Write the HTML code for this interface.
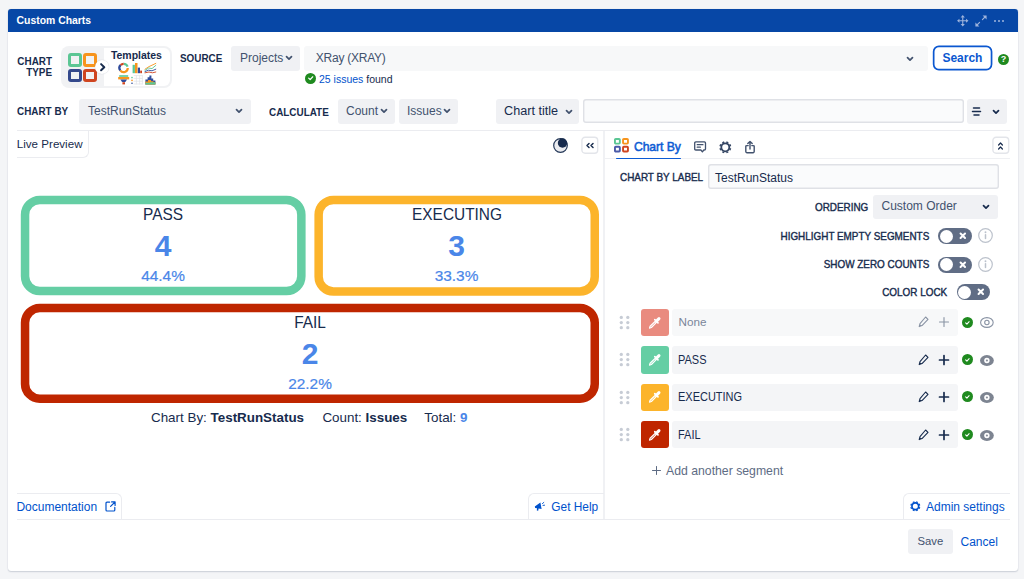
<!DOCTYPE html>
<html lang="en">
<head>
<meta charset="utf-8">
<title>Custom Charts</title>
<style>
*{box-sizing:border-box;margin:0;padding:0}
html,body{width:1024px;height:579px;overflow:hidden}
body{background:#f4f5f7;font-family:"Liberation Sans",Arial,sans-serif;color:#172b4d;font-size:12px;position:relative}
.a{position:absolute}
.t{position:absolute;white-space:nowrap;line-height:16px}
.b{font-weight:bold}
.lbl{font-weight:bold;font-size:11.2px;letter-spacing:0;color:#172b4d;transform:scaleX(.885);transform-origin:0 50%}
.btn{position:absolute;background:#f0f1f4;border-radius:3px;color:#42526e}
.blue{color:#0052cc}
#panel{left:8px;top:9px;width:1010px;height:561.5px;background:#fff;border-radius:3px;box-shadow:0 1px 1.5px rgba(9,30,66,.16),0 0 1px rgba(9,30,66,.16)}
#hdr{left:8px;top:9px;width:1010px;height:23px;background:#0747a6;border-radius:3px 3px 0 0}
.hl{position:absolute;background:#ebecf0}
.card{position:absolute;border-style:solid;border-width:8px;border-radius:19px;background:#fff}
.ct{position:absolute;text-align:center;white-space:nowrap}
.c1{font-size:16.4px;line-height:20px;color:#172b4d;transform:scaleX(.94);margin-top:-.6px}
.c2{font-size:30px;line-height:34px;font-weight:bold;color:#4a86e8}
.c3{font-size:15.4px;line-height:20px;color:#4a86e8;-webkit-text-stroke:.2px #4a86e8;margin-top:.4px}
svg{position:absolute;overflow:visible}
.rl{font-size:11px;letter-spacing:0;-webkit-text-stroke:.4px #172b4d;color:#172b4d;transform:scaleX(.9);transform-origin:100% 50%}
.seg{position:absolute;left:672px;width:285.5px;height:27.4px;background:#f4f5f7;border-radius:3px}
.sw{position:absolute;left:641px;width:27.7px;height:27.4px;border-radius:3px}
</style>
</head>
<body>
<div id="panel" class="a"></div>
<div id="hdr" class="a"></div>
<div class="t b" style="left:16.6px;top:13.4px;font-size:10.4px;color:#fff">Custom Charts</div>

<svg style="left:957px;top:15px" width="11.5" height="11.5" viewBox="-5.75 -5.75 11.5 11.5"><path d="M0 -3.6 V3.6 M-3.6 0 H3.6" fill="none" stroke="#9fb4dc" stroke-width="1.1"/><path d="M-2.1 -3.3 L0 -5.7 L2.1 -3.3 Z M-2.1 3.3 L0 5.7 L2.1 3.3 Z M-3.3 -2.1 L-5.7 0 L-3.3 2.1 Z M3.3 -2.1 L5.7 0 L3.3 2.1 Z" fill="#9fb4dc"/></svg>
<svg style="left:974.8px;top:14.9px" width="12" height="12" viewBox="0 0 12 12"><path d="M7.4 4.6 L10 2 M4.6 7.4 L2 10" fill="none" stroke="#9fb4dc" stroke-width="1.1" stroke-linecap="round"/><path d="M7.6 .4 H11.6 V4.4 Z M.4 7.6 V11.6 H4.4 Z" fill="#9fb4dc"/></svg>
<div class="a" style="left:993.75px;top:20px;width:2.4px;height:2.4px;border-radius:1.2px;background:#9fb4dc"></div>
<div class="a" style="left:997.75px;top:20px;width:2.4px;height:2.4px;border-radius:1.2px;background:#9fb4dc"></div>
<div class="a" style="left:1001.75px;top:20px;width:2.4px;height:2.4px;border-radius:1.2px;background:#9fb4dc"></div>
<!-- row 1 -->
<div class="t lbl" style="left:8.2px;top:55.5px;line-height:11.5px;text-align:right;width:44px;transform-origin:100% 50%">CHART<br>TYPE</div>
<div class="a" id="tpl" style="left:61px;top:46px;width:111px;height:42px;background:#f1f2f4;border-radius:8px"></div>
<div class="a" style="left:104px;top:48px;width:66px;height:38px;background:#fff;border-radius:0 6px 6px 0"></div>
<div class="a" style="left:68.2px;top:53px;width:13.5px;height:13.5px;border:3px solid #5bc694;border-radius:3px;background:#f1f2f4"></div>
<div class="a" style="left:83.3px;top:53px;width:13.6px;height:13.5px;border:3px solid #f7941d;border-radius:3px;background:#f1f2f4"></div>
<div class="a" style="left:68.2px;top:68.6px;width:13.5px;height:13.5px;border:3px solid #34498c;border-radius:3px;background:#f1f2f4"></div>
<div class="a" style="left:83.3px;top:68.6px;width:13.6px;height:13.5px;border:3px solid #cf4520;border-radius:3px;background:#f1f2f4"></div>
<div class="a" style="left:94.8px;top:59.7px;width:14.4px;height:14.4px;border-radius:8px;background:#fff;box-shadow:0 0 1px rgba(9,30,66,.25)"></div>
<svg style="left:100px;top:63px" width="5.4" height="8.4" viewBox="0 0 5.4 8.4"><path d="M1.1 1.1 L4.3 4.2 L1.1 7.3" fill="none" stroke="#172b4d" stroke-width="2" stroke-linecap="round" stroke-linejoin="round"/></svg>
<div class="t b" style="left:111px;top:46.6px;font-size:10.5px;letter-spacing:-.05px">Templates</div>
<svg style="left:117px;top:61px" width="41" height="25" viewBox="117 61 41 25">
<g fill="none" stroke-width="2.2">
<path d="M123.6 63.8 A4.2 4.2 0 0 1 127.6 66.6" stroke="#5bc694"/>
<path d="M127.8 68 A4.2 4.2 0 0 1 120.2 70.4" stroke="#f7941d"/>
<path d="M120.2 70.4 A4.2 4.2 0 0 1 120.6 65" stroke="#2f4b9b"/>
<path d="M120.6 65 A4.2 4.2 0 0 1 123.6 63.8" stroke="#cf4520"/>
</g>
<rect x="132.6" y="64.8" width="2.3" height="8.4" fill="#5bc694"/>
<rect x="135" y="63" width="2.5" height="10.2" fill="#f7941d"/>
<rect x="137.8" y="67.6" width="2.2" height="5.6" fill="#2f4b9b"/>
<rect x="140.2" y="70.6" width="1.8" height="2.6" fill="#cf4520"/>
<g fill="none" stroke-width=".9" stroke-linecap="round">
<path d="M145 69.2 L149 66.6 L152 65.2 L155.8 63.4" stroke="#f7941d"/>
<path d="M145 70.4 L148.6 68 L152 68.6 L155.8 65.4" stroke="#5bc694"/>
<path d="M145 71.6 L148.4 70.2 L152 70.8 L155.8 69.2" stroke="#2f4b9b"/>
<path d="M145 72.8 L149 72 L152.4 72.8 L155.8 72" stroke="#cf4520"/>
</g>
<rect x="119.2" y="75.2" width="9" height="1.6" fill="#5bc694"/>
<rect x="118.2" y="77" width="11" height="2.4" fill="#f7941d"/>
<path d="M120.4 79.6 H127 L125.4 82 H122 Z" fill="#2f4b9b"/>
<rect x="122.4" y="82.2" width="2.6" height="2.2" fill="#cf4520"/>
<g stroke="#dfe1e6" stroke-width=".7" fill="none"><path d="M133.6 75.6 H142.6 M133.6 78.4 H142.6 M133.6 81.2 H142.6 M133.6 84 H142.6 M136.4 75.4 V84.4 M139.6 75.4 V84.4 M142.4 75.4 V84.4"/></g>
<circle cx="132" cy="77.6" r=".8" fill="#5bc694"/><circle cx="132" cy="80.4" r=".8" fill="#f7941d"/><circle cx="132" cy="83.2" r=".8" fill="#2f4b9b"/>
<path d="M145.4 84.6 V79.4 H147.6 V77.2 H149.4 V75.4 H151.4 V78.4 H153.2 V80.6 H155.4 V84.6 Z" fill="#2f4b9b"/>
<path d="M145.4 84.6 V81.4 H148 V80 H151 V81.2 H153.4 V82.2 H155.4 V84.6 Z" fill="#f7941d"/>
<path d="M145.4 84.6 V82.8 H150 V82.2 H155.4 V84.6 Z" fill="#5bc694"/>
</svg>
<div class="t lbl" style="left:180px;top:50.4px">SOURCE</div>
<div class="btn" style="left:231px;top:45.75px;width:69px;height:24.75px"></div>
<div class="t" style="left:240px;top:50px;color:#42526e">Projects</div>
<svg style="left:285.5px;top:56px" width="6" height="4.2" viewBox="0 0 6 4.2"><path d="M0.5 0.6 L3.0 3.2 L5.5 0.6" fill="none" stroke="#42526e" stroke-width="1.7" stroke-linecap="round" stroke-linejoin="round"/></svg>
<div class="btn" style="left:304.2px;top:45.75px;width:623.8px;height:24.75px;background:#f7f8f9"></div>
<div class="t" style="left:315.8px;top:50px;color:#42526e;letter-spacing:-.25px">XRay (XRAY)</div>
<svg style="left:907px;top:56.5px" width="6" height="4.2" viewBox="0 0 6 4.2"><path d="M0.5 0.6 L3.0 3.2 L5.5 0.6" fill="none" stroke="#42526e" stroke-width="1.7" stroke-linecap="round" stroke-linejoin="round"/></svg>
<div class="a" style="left:305px;top:73px;width:10.6px;height:10.6px;border-radius:6px;background:#1f8a1f"></div>
<svg style="left:307.7px;top:76.4px" width="5.4" height="4.3" viewBox="0 0 5 4"><path d="M0.6 2 L2 3.3 L4.4 0.7" fill="none" stroke="#fff" stroke-width="1.1" stroke-linecap="round" stroke-linejoin="round"/></svg>
<div class="t" style="left:319px;top:70.5px;font-size:10.5px"><span class="blue">25 issues</span> found</div>
<svg style="left:932px;top:45px" width="61" height="26" viewBox="0 0 61 26"><rect x="1.65" y="1.45" width="57.9" height="23.1" rx="5.2" fill="#fff" stroke="#0b57d0" stroke-width="1.7"/></svg>
<div class="t b" style="left:942.4px;top:50.4px;font-size:12px;color:#0b57d0">Search</div>
<div class="a" style="left:998px;top:53.5px;width:11px;height:11px;border-radius:6px;background:#1f8a1f"></div>
<div class="t b" style="left:998px;top:51px;width:11px;text-align:center;font-size:9px;color:#fff">?</div>
<!-- row 2 -->
<div class="t lbl" style="left:17px;top:103.4px">CHART BY</div>
<div class="btn" style="left:79px;top:99px;width:172px;height:24.5px"></div>
<div class="t" style="left:88px;top:103px;color:#42526e">TestRunStatus</div>
<svg style="left:236px;top:109px" width="6" height="4.2" viewBox="0 0 6 4.2"><path d="M0.5 0.6 L3.0 3.2 L5.5 0.6" fill="none" stroke="#42526e" stroke-width="1.7" stroke-linecap="round" stroke-linejoin="round"/></svg>
<div class="t lbl" style="left:269.4px;top:103.5px">CALCULATE</div>
<div class="btn" style="left:338px;top:99px;width:57px;height:24.5px"></div>
<div class="t" style="left:346px;top:103px;color:#42526e">Count</div>
<svg style="left:380.5px;top:109px" width="6" height="4.2" viewBox="0 0 6 4.2"><path d="M0.5 0.6 L3.0 3.2 L5.5 0.6" fill="none" stroke="#42526e" stroke-width="1.7" stroke-linecap="round" stroke-linejoin="round"/></svg>
<div class="btn" style="left:399.4px;top:99px;width:59px;height:24.5px"></div>
<div class="t" style="left:407px;top:103px;color:#42526e">Issues</div>
<svg style="left:443.6px;top:109px" width="6" height="4.2" viewBox="0 0 6 4.2"><path d="M0.5 0.6 L3.0 3.2 L5.5 0.6" fill="none" stroke="#42526e" stroke-width="1.7" stroke-linecap="round" stroke-linejoin="round"/></svg>
<div class="btn" style="left:496px;top:99px;width:83.2px;height:24.5px"></div>
<div class="t" style="left:504px;top:103px;font-size:12.65px;color:#172b4d">Chart title</div>
<svg style="left:565.5px;top:109.5px" width="6" height="4.2" viewBox="0 0 6 4.2"><path d="M0.5 0.6 L3.0 3.2 L5.5 0.6" fill="none" stroke="#42526e" stroke-width="1.7" stroke-linecap="round" stroke-linejoin="round"/></svg>
<div class="a" style="left:583px;top:99.1px;width:380.6px;height:24.4px;box-shadow:inset 0 0 0 1.4px #dfe1e6;border-radius:3px;background:#fafbfc"></div>
<div class="btn" style="left:967px;top:99px;width:39.5px;height:24.5px"></div>
<svg style="left:972px;top:106.5px" width="9" height="9" viewBox="0 0 9 9"><path d="M1.5 1 H7.5 M0.5 4.5 H8.5 M2 8 H7" fill="none" stroke="#172b4d" stroke-width="1.5" stroke-linecap="round"/></svg>
<svg style="left:993px;top:109.5px" width="6" height="4.2" viewBox="0 0 6 4.2"><path d="M0.5 0.6 L3.0 3.2 L5.5 0.6" fill="none" stroke="#172b4d" stroke-width="1.7" stroke-linecap="round" stroke-linejoin="round"/></svg>
<div class="hl" style="left:17px;top:130.2px;width:993px;height:1.3px"></div>
<div class="hl" style="left:603.3px;top:131px;width:1.5px;height:389px;background:#f0f1f4"></div>
<div class="hl" style="left:17px;top:519.3px;width:993px;height:1px"></div>
<div class="hl" style="left:604.6px;top:158px;width:405.4px;height:1.2px;background:#eff0f3"></div>
<!-- live preview -->
<div class="a" style="left:17px;top:131px;width:72.2px;height:27px;border:1px solid #ebecf0;border-left:none;border-top:none;border-radius:0 0 6px 0"></div>
<div class="t" style="left:16.8px;top:136.3px;font-size:11.6px">Live Preview</div>
<svg style="left:553px;top:137.5px" width="15" height="15" viewBox="0 0 15 15"><circle cx="7.5" cy="7.5" r="6.8" fill="#ebecf0" stroke="#253858" stroke-width="1.2"/><circle cx="9.5" cy="5" r="4.7" fill="#172b4d"/></svg>
<svg style="left:581px;top:136px" width="18" height="18" viewBox="0 0 18 18"><rect x=".9" y="1.3" width="15.8" height="15.9" rx="3.2" fill="#fff" stroke="#e3e5ea" stroke-width="1.4"/></svg>
<svg style="left:585.6px;top:142.8px" width="8" height="5" viewBox="0 0 8 5"><path d="M3 0.5 L1 2.5 L3 4.5 M7 0.5 L5 2.5 L7 4.5" fill="none" stroke="#172b4d" stroke-width="1.5" stroke-linecap="round" stroke-linejoin="round"/></svg>
<!-- cards -->
<svg style="left:0;top:0" width="1024" height="579" viewBox="0 0 1024 579"><rect x="25.05" y="200.00" width="276.30" height="91.05" rx="14.75" fill="#fff" stroke="#65cea4" stroke-width="8.5"/></svg>
<svg style="left:0;top:0" width="1024" height="579" viewBox="0 0 1024 579"><rect x="318.65" y="200.00" width="276.10" height="91.45" rx="14.75" fill="#fff" stroke="#fcb42b" stroke-width="8.5"/></svg>
<svg style="left:0;top:0" width="1024" height="579" viewBox="0 0 1024 579"><rect x="25.05" y="308.05" width="569.70" height="90.60" rx="14.75" fill="#fff" stroke="#bf2600" stroke-width="8.5"/></svg>
<div class="ct c1" style="left:63px;width:200px;top:204.5px">PASS</div>
<div class="ct c2" style="left:63px;width:200px;top:229px">4</div>
<div class="ct c3" style="left:63px;width:200px;top:266px">44.4%</div>
<div class="ct c1" style="left:356.5px;width:200px;top:204.5px">EXECUTING</div>
<div class="ct c2" style="left:356.5px;width:200px;top:229px">3</div>
<div class="ct c3" style="left:356.5px;width:200px;top:266px">33.3%</div>
<div class="ct c1" style="left:210px;width:200px;top:312.5px">FAIL</div>
<div class="ct c2" style="left:210px;width:200px;top:337px">2</div>
<div class="ct c3" style="left:210px;width:200px;top:374px">22.2%</div>
<div class="t" style="left:151px;top:409.5px;font-size:13.4px">Chart By: <b>TestRunStatus</b></div>
<div class="t" style="left:322.4px;top:409.5px;font-size:13.4px">Count: <b>Issues</b></div>
<div class="t" style="left:424.3px;top:409.5px;font-size:13.4px">Total: <b style="color:#4a86e8">9</b></div>
<!-- right panel -->
<svg style="left:614.1px;top:138.2px" width="14.9" height="14.5" viewBox="0 0 14.9 14.5"><g fill="#fff" stroke-width="1.9">
<rect x=".95" y=".95" width="4.9" height="4.7" rx=".8" stroke="#5bc694"/>
<rect x="9.05" y=".95" width="4.9" height="4.7" rx=".8" stroke="#f7941d"/>
<rect x=".95" y="8.75" width="4.9" height="4.7" rx=".8" stroke="#4a5aa8"/>
<rect x="9.05" y="8.75" width="4.9" height="4.7" rx=".8" stroke="#cf4520"/></g></svg>
<div class="t" style="left:633.9px;top:139px;font-size:12.2px;letter-spacing:-.05px;color:#0c5bd4;-webkit-text-stroke:.5px #0c5bd4">Chart By</div>
<div class="a" style="left:615.5px;top:157.7px;width:65.5px;height:1.8px;background:#0c5bd4;border-radius:1px"></div>
<svg style="left:693.7px;top:140.8px" width="12.4" height="12" viewBox="0 0 12.4 12"><path d="M1.8 .9 H10.4 Q11.5 .9 11.5 2 V7.9 Q11.5 9 10.4 9 H9.8 L8.4 10.9 L6.9 9 H1.8 Q.7 9 .7 7.9 V2 Q.7 .9 1.8 .9 Z" fill="none" stroke="#42526e" stroke-width="1.3" stroke-linejoin="round"/><path d="M3.2 3.7 H9 M3.2 6.2 H6.4" stroke="#42526e" stroke-width="1.2" stroke-linecap="round"/></svg>
<svg style="left:718.6px;top:140.6px" width="12.6" height="12.6" viewBox="-6.3 -6.3 12.6 12.6"><circle r="4" fill="none" stroke="#344563" stroke-width="1.8"/><g stroke="#344563" stroke-width="2.1" transform="rotate(22.5)"><path d="M0 -4.6 V-6 M0 4.6 V6"/><path d="M0 -4.6 V-6 M0 4.6 V6" transform="rotate(45)"/><path d="M0 -4.6 V-6 M0 4.6 V6" transform="rotate(90)"/><path d="M0 -4.6 V-6 M0 4.6 V6" transform="rotate(135)"/></g></svg>
<svg style="left:745px;top:140.5px" width="10" height="12.5" viewBox="0 0 10 12.5"><path d="M3.2 4.6 H1.8 Q.8 4.6 .8 5.6 V10.6 Q.8 11.7 1.8 11.7 H8.2 Q9.2 11.7 9.2 10.6 V5.6 Q9.2 4.6 8.2 4.6 H6.8" fill="none" stroke="#42526e" stroke-width="1.4" stroke-linecap="round"/><path d="M5 8 V.6 M2.8 2.6 L5 .4 L7.2 2.6" fill="none" stroke="#42526e" stroke-width="1.4" stroke-linecap="round" stroke-linejoin="round"/></svg>
<svg style="left:992px;top:136px" width="18" height="18" viewBox="0 0 18 18"><rect x=".9" y="1.3" width="15.8" height="15.9" rx="3.2" fill="#fff" stroke="#e3e5ea" stroke-width="1.4"/></svg>
<svg style="left:998px;top:141.5px" width="5" height="8" viewBox="0 0 5 8"><path d="M.6 3 L2.5 1 L4.4 3 M.6 7 L2.5 5 L4.4 7" fill="none" stroke="#172b4d" stroke-width="1.2" stroke-linecap="round" stroke-linejoin="round"/></svg>
<div class="t rl" style="left:620px;top:169.1px;transform-origin:0 50%">CHART BY LABEL</div>
<div class="a" style="left:708px;top:164.1px;width:291px;height:25.4px;box-shadow:inset 0 0 0 1.4px #dfe1e6;border-radius:3px;background:#fafbfc"></div>
<div class="t" style="left:715px;top:170px;font-size:12px;color:#172b4d">TestRunStatus</div>
<div class="t rl" style="right:155.5px;top:199px">ORDERING</div>
<div class="btn" style="left:873.2px;top:194.7px;width:124.6px;height:24.4px"></div>
<div class="t" style="left:881.5px;top:198.4px;font-size:12px;color:#42526e">Custom Order</div>
<svg style="left:983px;top:204.5px" width="6" height="4.2" viewBox="0 0 6 4.2"><path d="M0.5 0.6 L3.0 3.2 L5.5 0.6" fill="none" stroke="#172b4d" stroke-width="1.7" stroke-linecap="round" stroke-linejoin="round"/></svg>
<div class="t rl" style="right:94.6px;top:227.8px;word-spacing:0">HIGHLIGHT EMPTY SEGMENTS</div>
<div class="a" style="left:938px;top:228px;width:34px;height:16px;border-radius:8px;background:#606d85"></div>
<div class="a" style="left:939.6px;top:229.5px;width:13px;height:13px;border-radius:7px;background:#fff"></div>
<svg style="left:960.2px;top:233.2px" width="5.6" height="5.6" viewBox="0 0 5 5"><path d="M0.5 0.5 L4.5 4.5 M4.5 0.5 L0.5 4.5" stroke="#fff" stroke-width="1.8" stroke-linecap="round"/></svg>
<svg style="left:978.0px;top:228.3px" width="15" height="15" viewBox="0 0 15 15"><circle cx="7.5" cy="7.5" r="6.8" fill="none" stroke="#bcc2cc" stroke-width="1.2"/><path d="M7.5 6.8 V10.6" stroke="#bcc2cc" stroke-width="1.5" stroke-linecap="round"/><circle cx="7.5" cy="4.3" r=".95" fill="#bcc2cc"/></svg>
<div class="t rl" style="right:94.6px;top:256.3px;word-spacing:0">SHOW ZERO COUNTS</div>
<div class="a" style="left:938px;top:256.5px;width:34px;height:16px;border-radius:8px;background:#606d85"></div>
<div class="a" style="left:939.6px;top:258.0px;width:13px;height:13px;border-radius:7px;background:#fff"></div>
<svg style="left:960.2px;top:261.7px" width="5.6" height="5.6" viewBox="0 0 5 5"><path d="M0.5 0.5 L4.5 4.5 M4.5 0.5 L0.5 4.5" stroke="#fff" stroke-width="1.8" stroke-linecap="round"/></svg>
<svg style="left:978.0px;top:256.8px" width="15" height="15" viewBox="0 0 15 15"><circle cx="7.5" cy="7.5" r="6.8" fill="none" stroke="#bcc2cc" stroke-width="1.2"/><path d="M7.5 6.8 V10.6" stroke="#bcc2cc" stroke-width="1.5" stroke-linecap="round"/><circle cx="7.5" cy="4.3" r=".95" fill="#bcc2cc"/></svg>
<div class="t rl" style="right:76.8px;top:284px;word-spacing:0">COLOR LOCK</div>
<div class="a" style="left:956.8px;top:284px;width:33.4px;height:16px;border-radius:8px;background:#606d85"></div>
<div class="a" style="left:958.3px;top:285.5px;width:13px;height:13px;border-radius:7px;background:#fff"></div>
<svg style="left:978.1px;top:289.3px" width="5.6" height="5.6" viewBox="0 0 5 5"><path d="M0.5 0.5 L4.5 4.5 M4.5 0.5 L0.5 4.5" stroke="#fff" stroke-width="1.8" stroke-linecap="round"/></svg>
<!-- segments -->
<svg style="left:619px;top:314.90px" width="11" height="15" viewBox="0 0 11 15"><g fill="#c7ccd5"><circle cx="2.3" cy="2.4" r="1.65"/><circle cx="8.8" cy="2.4" r="1.65"/><circle cx="2.3" cy="7.6" r="1.65"/><circle cx="8.8" cy="7.6" r="1.65"/><circle cx="2.3" cy="12.7" r="1.65"/><circle cx="8.8" cy="12.7" r="1.65"/></g></svg>
<svg style="left:619px;top:352.20px" width="11" height="15" viewBox="0 0 11 15"><g fill="#c7ccd5"><circle cx="2.3" cy="2.4" r="1.65"/><circle cx="8.8" cy="2.4" r="1.65"/><circle cx="2.3" cy="7.6" r="1.65"/><circle cx="8.8" cy="7.6" r="1.65"/><circle cx="2.3" cy="12.7" r="1.65"/><circle cx="8.8" cy="12.7" r="1.65"/></g></svg>
<svg style="left:619px;top:389.60px" width="11" height="15" viewBox="0 0 11 15"><g fill="#c7ccd5"><circle cx="2.3" cy="2.4" r="1.65"/><circle cx="8.8" cy="2.4" r="1.65"/><circle cx="2.3" cy="7.6" r="1.65"/><circle cx="8.8" cy="7.6" r="1.65"/><circle cx="2.3" cy="12.7" r="1.65"/><circle cx="8.8" cy="12.7" r="1.65"/></g></svg>
<svg style="left:619px;top:426.90px" width="11" height="15" viewBox="0 0 11 15"><g fill="#c7ccd5"><circle cx="2.3" cy="2.4" r="1.65"/><circle cx="8.8" cy="2.4" r="1.65"/><circle cx="2.3" cy="7.6" r="1.65"/><circle cx="8.8" cy="7.6" r="1.65"/><circle cx="2.3" cy="12.7" r="1.65"/><circle cx="8.8" cy="12.7" r="1.65"/></g></svg>
<div class="sw" style="top:308.9px;background:#e98b7f"></div>
<svg style="left:647.9px;top:316.6px" width="12.6" height="12.6" viewBox="0 0 12.6 12.6"><path d="M11 1.6 L9 3.6" stroke="#fff" stroke-width="3" stroke-linecap="round"/><path d="M6.8 2.6 L10 5.8" stroke="#fff" stroke-width="1.7" stroke-linecap="round"/><path d="M7.3 4.2 L8.5 5.4 L3.4 10.5 L1.5 11.1 L2.1 9.3 Z" fill="none" stroke="#fff" stroke-width="1.2" stroke-linejoin="round"/></svg>
<div class="seg" style="top:308.9px;background:#f7f8f9"></div>
<div class="t" style="left:678.5px;top:314.3px;font-size:11.7px;color:#7a869a">None</div>
<svg style="left:918px;top:316px" width="11" height="12" viewBox="0 0 11 12"><path d="M7.6 1 L10 3.4 L4 9.6 L1.2 10.6 L2 7.6 Z" fill="none" stroke="#8993a4" stroke-width="1.1" stroke-linejoin="round"/><path d="M1.2 10.6 L2 8.4 L3.4 9.8 Z" fill="#8993a4"/></svg>
<svg style="left:939px;top:317px" width="10" height="10" viewBox="0 0 10 10"><path d="M5 0.5 V9.5 M0.5 5 H9.5" stroke="#8993a4" stroke-width="1.1" stroke-linecap="round"/></svg>
<div class="a" style="left:962px;top:316.5px;width:11px;height:11px;border-radius:6px;background:#1f8a1f"></div>
<svg style="left:965.1px;top:320.5px" width="4.8" height="4" viewBox="0 0 6 5"><path d="M0.8 2.4 L2.4 4 L5.2 0.9" fill="none" stroke="#fff" stroke-width="1.35" stroke-linecap="round" stroke-linejoin="round"/></svg>
<svg style="left:979.9px;top:317.30px" width="13.8" height="11" viewBox="0 0 13.8 11"><ellipse cx="6.9" cy="5.5" rx="6.3" ry="4.9" fill="none" stroke="#8993a4" stroke-width="1.1"/><circle cx="6.9" cy="5.5" r="2.2" fill="none" stroke="#8993a4" stroke-width="1.1"/></svg>
<div class="sw" style="top:346.2px;background:#65cea4"></div>
<svg style="left:647.9px;top:353.9px" width="12.6" height="12.6" viewBox="0 0 12.6 12.6"><path d="M11 1.6 L9 3.6" stroke="#fff" stroke-width="3" stroke-linecap="round"/><path d="M6.8 2.6 L10 5.8" stroke="#fff" stroke-width="1.7" stroke-linecap="round"/><path d="M7.3 4.2 L8.5 5.4 L3.4 10.5 L1.5 11.1 L2.1 9.3 Z" fill="none" stroke="#fff" stroke-width="1.2" stroke-linejoin="round"/></svg>
<div class="seg" style="top:346.2px"></div>
<div class="t" style="left:678.3px;top:351.8px;font-size:12px;transform:scaleX(.915);transform-origin:0 50%;color:#172b4d">PASS</div>
<svg style="left:918px;top:353.9px" width="11" height="12" viewBox="0 0 11 12"><path d="M7.6 1 L10 3.4 L4 9.6 L1.2 10.6 L2 7.6 Z" fill="none" stroke="#172b4d" stroke-width="1.1" stroke-linejoin="round"/><path d="M1.2 10.6 L2 8.4 L3.4 9.8 Z" fill="#172b4d"/></svg>
<svg style="left:939px;top:354.9px" width="10" height="10" viewBox="0 0 10 10"><path d="M5 0.5 V9.5 M0.5 5 H9.5" stroke="#172b4d" stroke-width="1.7" stroke-linecap="round"/></svg>
<div class="a" style="left:962px;top:353.8px;width:11px;height:11px;border-radius:6px;background:#1f8a1f"></div>
<svg style="left:965.1px;top:357.8px" width="4.8" height="4" viewBox="0 0 6 5"><path d="M0.8 2.4 L2.4 4 L5.2 0.9" fill="none" stroke="#fff" stroke-width="1.35" stroke-linecap="round" stroke-linejoin="round"/></svg>
<svg style="left:979.9px;top:354.80px" width="13.8" height="11" viewBox="0 0 13.8 11"><ellipse cx="6.9" cy="5.5" rx="6.9" ry="5.4" fill="#7d8491"/><circle cx="6.9" cy="5.5" r="2.7" fill="#fff"/><circle cx="6.9" cy="5.5" r="1.1" fill="#8a909c"/></svg>
<div class="sw" style="top:383.6px;background:#fcb42b"></div>
<svg style="left:647.9px;top:391.3px" width="12.6" height="12.6" viewBox="0 0 12.6 12.6"><path d="M11 1.6 L9 3.6" stroke="#fff" stroke-width="3" stroke-linecap="round"/><path d="M6.8 2.6 L10 5.8" stroke="#fff" stroke-width="1.7" stroke-linecap="round"/><path d="M7.3 4.2 L8.5 5.4 L3.4 10.5 L1.5 11.1 L2.1 9.3 Z" fill="none" stroke="#fff" stroke-width="1.2" stroke-linejoin="round"/></svg>
<div class="seg" style="top:383.6px"></div>
<div class="t" style="left:678.3px;top:389.2px;font-size:12px;transform:scaleX(.915);transform-origin:0 50%;color:#172b4d">EXECUTING</div>
<svg style="left:918px;top:391.3px" width="11" height="12" viewBox="0 0 11 12"><path d="M7.6 1 L10 3.4 L4 9.6 L1.2 10.6 L2 7.6 Z" fill="none" stroke="#172b4d" stroke-width="1.1" stroke-linejoin="round"/><path d="M1.2 10.6 L2 8.4 L3.4 9.8 Z" fill="#172b4d"/></svg>
<svg style="left:939px;top:392.3px" width="10" height="10" viewBox="0 0 10 10"><path d="M5 0.5 V9.5 M0.5 5 H9.5" stroke="#172b4d" stroke-width="1.7" stroke-linecap="round"/></svg>
<div class="a" style="left:962px;top:391.2px;width:11px;height:11px;border-radius:6px;background:#1f8a1f"></div>
<svg style="left:965.1px;top:395.2px" width="4.8" height="4" viewBox="0 0 6 5"><path d="M0.8 2.4 L2.4 4 L5.2 0.9" fill="none" stroke="#fff" stroke-width="1.35" stroke-linecap="round" stroke-linejoin="round"/></svg>
<svg style="left:979.9px;top:392.20px" width="13.8" height="11" viewBox="0 0 13.8 11"><ellipse cx="6.9" cy="5.5" rx="6.9" ry="5.4" fill="#7d8491"/><circle cx="6.9" cy="5.5" r="2.7" fill="#fff"/><circle cx="6.9" cy="5.5" r="1.1" fill="#8a909c"/></svg>
<div class="sw" style="top:420.9px;background:#bf2600"></div>
<svg style="left:647.9px;top:428.6px" width="12.6" height="12.6" viewBox="0 0 12.6 12.6"><path d="M11 1.6 L9 3.6" stroke="#fff" stroke-width="3" stroke-linecap="round"/><path d="M6.8 2.6 L10 5.8" stroke="#fff" stroke-width="1.7" stroke-linecap="round"/><path d="M7.3 4.2 L8.5 5.4 L3.4 10.5 L1.5 11.1 L2.1 9.3 Z" fill="none" stroke="#fff" stroke-width="1.2" stroke-linejoin="round"/></svg>
<div class="seg" style="top:420.9px"></div>
<div class="t" style="left:678.3px;top:426.5px;font-size:12px;transform:scaleX(.915);transform-origin:0 50%;color:#172b4d">FAIL</div>
<svg style="left:918px;top:428.6px" width="11" height="12" viewBox="0 0 11 12"><path d="M7.6 1 L10 3.4 L4 9.6 L1.2 10.6 L2 7.6 Z" fill="none" stroke="#172b4d" stroke-width="1.1" stroke-linejoin="round"/><path d="M1.2 10.6 L2 8.4 L3.4 9.8 Z" fill="#172b4d"/></svg>
<svg style="left:939px;top:429.6px" width="10" height="10" viewBox="0 0 10 10"><path d="M5 0.5 V9.5 M0.5 5 H9.5" stroke="#172b4d" stroke-width="1.7" stroke-linecap="round"/></svg>
<div class="a" style="left:962px;top:428.5px;width:11px;height:11px;border-radius:6px;background:#1f8a1f"></div>
<svg style="left:965.1px;top:432.5px" width="4.8" height="4" viewBox="0 0 6 5"><path d="M0.8 2.4 L2.4 4 L5.2 0.9" fill="none" stroke="#fff" stroke-width="1.35" stroke-linecap="round" stroke-linejoin="round"/></svg>
<svg style="left:979.9px;top:429.50px" width="13.8" height="11" viewBox="0 0 13.8 11"><ellipse cx="6.9" cy="5.5" rx="6.9" ry="5.4" fill="#7d8491"/><circle cx="6.9" cy="5.5" r="2.7" fill="#fff"/><circle cx="6.9" cy="5.5" r="1.1" fill="#8a909c"/></svg>
<svg style="left:651.5px;top:466px" width="9" height="9" viewBox="0 0 9 9"><path d="M4.5 0.5 V8.5 M0.5 4.5 H8.5" stroke="#5e6c84" stroke-width="1" stroke-linecap="round"/></svg>
<div class="t" style="left:666px;top:462.5px;font-size:12.25px;color:#5e6c84">Add another segment</div>
<!-- bottom -->
<div class="a" style="left:17px;top:493.2px;width:105px;height:27px;border:1px solid #ebecf0;border-left:none;border-bottom:none;border-radius:0 6px 0 0"></div>
<div class="t blue" style="left:16.4px;top:498.8px;font-size:12px">Documentation</div>
<svg style="left:104.5px;top:501px" width="11" height="11" viewBox="0 0 11 11"><path d="M4.6 1.2 H2 Q1 1.2 1 2.2 V9 Q1 10 2 10 H8.8 Q9.8 10 9.8 9 V6.4" fill="none" stroke="#0052cc" stroke-width="1.2" stroke-linecap="round"/><path d="M6.6 0.9 H10.1 V4.4 M10 1 L5.6 5.4" fill="none" stroke="#0052cc" stroke-width="1.2" stroke-linecap="round" stroke-linejoin="round"/></svg>
<div class="a" style="left:528.4px;top:493.2px;width:75.6px;height:27px;border:1px solid #ebecf0;border-right:none;border-bottom:none;border-radius:6px 0 0 0"></div>
<div class="t blue" style="left:551.3px;top:498.8px;font-size:11.9px">Get Help</div>
<svg style="left:534.2px;top:501.2px" width="11" height="11" viewBox="0 0 11 11"><path d="M0.8 5.4 L6.4 1.6 L7.6 8 L4.6 7.6 L4.2 9.8 L2.8 9.6 L3 7.2 L1.2 7 Z" fill="#0052cc"/><path d="M8.4 2.6 L9.8 1.4 M9 4.4 L10.6 4.2" stroke="#0052cc" stroke-width=".9" stroke-linecap="round"/></svg>
<div class="a" style="left:903px;top:493.2px;width:107px;height:27px;border:1px solid #ebecf0;border-right:none;border-bottom:none;border-radius:6px 0 0 0"></div>
<div class="t blue" style="left:926px;top:498.8px;font-size:12px">Admin settings</div>
<svg style="left:909.5px;top:500.7px" width="10.6" height="10.6" viewBox="-6.3 -6.3 12.6 12.6"><circle r="4" fill="none" stroke="#0052cc" stroke-width="2"/><g stroke="#0052cc" stroke-width="2.2" transform="rotate(22.5)"><path d="M0 -4.6 V-6 M0 4.6 V6"/><path d="M0 -4.6 V-6 M0 4.6 V6" transform="rotate(45)"/><path d="M0 -4.6 V-6 M0 4.6 V6" transform="rotate(90)"/><path d="M0 -4.6 V-6 M0 4.6 V6" transform="rotate(135)"/></g></svg>
<div class="btn" style="left:908px;top:529px;width:45px;height:25px"></div>
<div class="t" style="left:917.5px;top:533.3px;font-size:11.3px;color:#42526e">Save</div>
<div class="t blue" style="left:960.5px;top:533.5px;font-size:12px">Cancel</div>
</body>
</html>
